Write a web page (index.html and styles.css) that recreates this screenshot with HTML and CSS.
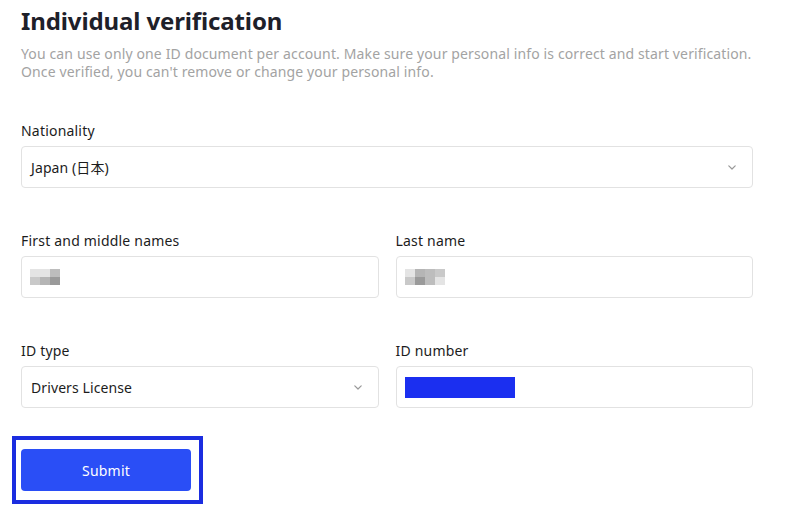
FILE: index.html
```html
<!DOCTYPE html>
<html>
<head>
<meta charset="utf-8">
<link rel="stylesheet" href="styles.css">
</head>
<body>
<div class="page">
  <h1 class="title">Individual verification</h1>
  <p class="desc">You can use only one ID document per account. Make sure your personal info is correct and start verification.<br>Once verified, you can't remove or change your personal info.</p>

  <div class="row single">
    <div class="field">
      <div class="label">Nationality</div>
      <div class="box select">
        <span class="value">Japan (日本)</span>
        <svg class="chev" width="8" height="5" viewBox="0 0 8 5"><path d="M0.8 0.8l3.2 3.2 3.2-3.2" fill="none" stroke="#999" stroke-width="1.2" stroke-linecap="round" stroke-linejoin="round"/></svg>
      </div>
    </div>
  </div>

  <div class="row">
    <div class="field">
      <div class="label">First and middle names</div>
      <div class="box">
        <span class="blur">
          <span class="col"><i class="px l1"></i><i class="px l2"></i></span>
          <span class="col"><i class="px l1"></i><i class="px d1"></i></span>
          <span class="col"><i class="px d2"></i><i class="px d3"></i></span>
        </span>
      </div>
    </div>
    <div class="field">
      <div class="label">Last name</div>
      <div class="box">
        <span class="blur">
          <span class="col"><i class="px l1"></i><i class="px l2"></i></span>
          <span class="col"><i class="px d1"></i><i class="px d3"></i></span>
          <span class="col"><i class="px d2"></i><i class="px d2"></i></span>
          <span class="col"><i class="px l2"></i><i class="px l1"></i></span>
        </span>
      </div>
    </div>
  </div>

  <div class="row">
    <div class="field">
      <div class="label">ID type</div>
      <div class="box select">
        <span class="value">Drivers License</span>
        <svg class="chev" width="8" height="5" viewBox="0 0 8 5"><path d="M0.8 0.8l3.2 3.2 3.2-3.2" fill="none" stroke="#999" stroke-width="1.2" stroke-linecap="round" stroke-linejoin="round"/></svg>
      </div>
    </div>
    <div class="field">
      <div class="label">ID number</div>
      <div class="box">
        <span class="redact"></span>
      </div>
    </div>
  </div>

  <div class="submit-wrap">
    <button class="submit">Submit</button>
  </div>
</div>
</body>
</html>
```

FILE: styles.css
```css
* { box-sizing: border-box; }
html, body { margin: 0; padding: 0; background: #fff; }
body {
  font-family: "Noto Sans", "Open Sans", "Noto Sans CJK JP", sans-serif;
  color: #1c1d22;
  width: 800px;
  height: 512px;
  overflow: hidden;
}
.page {
  padding: 4px 47px 0 21px;
}
.title {
  margin: 0;
  font-size: 24px;
  font-weight: 700;
  line-height: 34px;
  color: #1e2029;
  letter-spacing: -0.12px;
}
.desc {
  margin: 7px 0 0;
  font-size: 14px;
  line-height: 18px;
  color: #a3a3a3;
  letter-spacing: 0.13px;
}
.row {
  display: grid;
  grid-template-columns: 1fr 1fr;
  column-gap: 17px;
}
.row.single { grid-template-columns: 1fr; margin-top: 40px; }
.row + .row { margin-top: 43px; }
.label {
  font-size: 14px;
  line-height: 20px;
  color: #1c1c1c;
  margin-bottom: 5px;
  letter-spacing: 0.2px;
}
.box {
  height: 42px;
  border: 1px solid #e2e2e2;
  border-radius: 4px;
  display: flex;
  align-items: center;
  padding: 0 16px 0 9px;
  justify-content: space-between;
}
.value {
  font-size: 14px;
  color: #1c1c1c;
  letter-spacing: 0.1px;
}
.blur {
  display: flex;
  margin-left: -1px;
}
.col {
  display: flex;
  flex-direction: column;
}
.px {
  display: block;
  width: 10px;
  height: 8px;
}
.l1 { background: #e4e4e4; }
.l2 { background: #c9c9c9; }
.d1 { background: #b5b5b5; }
.d2 { background: #bdbdbd; }
.d3 { background: #9a9a9a; }
.redact {
  display: block;
  width: 110px;
  height: 21px;
  margin-left: -1px;
  background: #1b2ff0;
}
.submit-wrap {
  margin: 28px 0 0 -9px;
  width: 191px;
  height: 68px;
  border: 4px solid #1b2de0;
  padding: 9px 0 0 5px;
}
.submit {
  display: block;
  width: 170px;
  height: 42px;
  background: #2a4ef6;
  border: none;
  border-radius: 4px;
  color: #fff;
  font-family: inherit;
  font-size: 14px;
  font-weight: 400;
  letter-spacing: 0.2px;
}
```
